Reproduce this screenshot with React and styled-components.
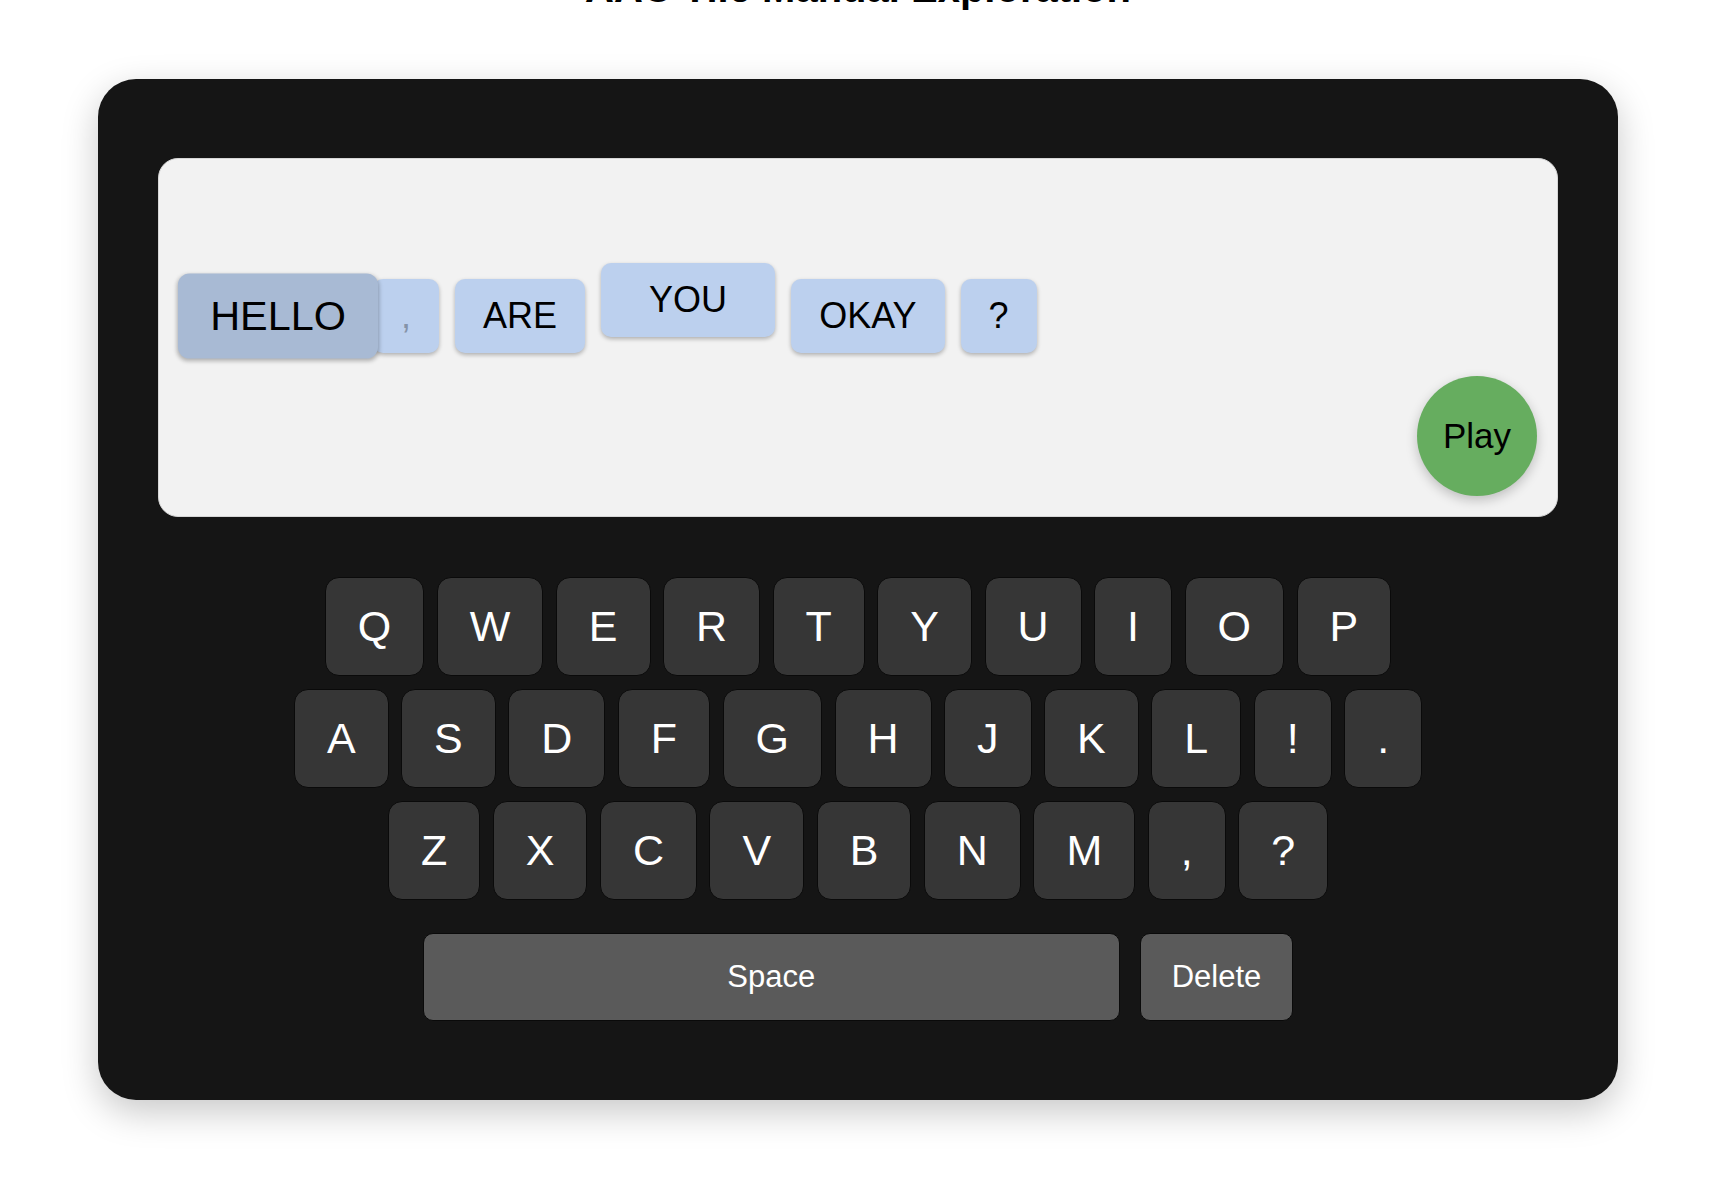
import React from "react";
import styled, { createGlobalStyle } from "styled-components";

const GlobalStyle = createGlobalStyle`
  html {
    overflow: hidden;
  }
  body {
    margin: 0;
    padding: 0;
    background: #ffffff;
    font-family: "Liberation Sans", Arial, sans-serif;
  }
`;

const Page = styled.div`
  width: 1520px;
  padding: 0 0 80px 98px;
`;

const Title = styled.h1`
  margin: -34px 0 68px;
  font-size: 40px;
  font-weight: bold;
  text-align: center;
  color: #000;
`;

const Device = styled.div`
  box-sizing: border-box;
  width: 1520px;
  padding: 79px 60px 79px;
  background: #151515;
  border-radius: 38px;
  box-shadow: 0 12px 36px rgba(0, 0, 0, 0.22);
`;

const Screen = styled.div`
  position: relative;
  box-sizing: border-box;
  height: 359px;
  display: flex;
  align-items: center;
  gap: 16px;
  padding: 0 0 43px 32px;
  background: #f2f2f2;
  border: 1px solid #d6d6d6;
  border-radius: 20px;
`;

const Tile = styled.div`
  position: relative;
  z-index: ${(p) => (p.$active ? 2 : 1)};
  padding: 16px ${(p) => p.$padX || 28}px;
  margin-left: ${(p) => p.$pull || 0}px;
  font-size: 36px;
  color: ${(p) => (p.$faded ? "#8593a8" : "#000")};
  background: ${(p) => (p.$active ? "#a8bad4" : "#bcd0ee")};
  border-radius: 10px;
  box-shadow: 0 2px 4px rgba(0, 0, 0, 0.28);
  transform: ${(p) =>
    p.$active ? "scale(1.15)" : p.$lift ? `translateY(-${p.$lift}px)` : "none"};
  white-space: nowrap;
`;

const PlayButton = styled.button`
  position: absolute;
  right: 20px;
  bottom: 20px;
  width: 120px;
  height: 120px;
  border: none;
  border-radius: 50%;
  background: #66ad5f;
  color: #000;
  font-family: "Liberation Sans", Arial, sans-serif;
  font-size: 35px;
  box-shadow: 0 4px 12px rgba(0, 0, 0, 0.22);
  cursor: pointer;
`;

const Keyboard = styled.div`
  display: flex;
  flex-direction: column;
  align-items: center;
  gap: 13px;
  margin-top: 60px;
`;

const KeyRow = styled.div`
  display: flex;
  justify-content: center;
  gap: 12.5px;
  margin-top: ${(p) => p.$spaced || 0}px;
`;

const Key = styled.button`
  box-sizing: border-box;
  padding: 24px 32px;
  font-family: "Liberation Sans", Arial, sans-serif;
  font-size: 43px;
  line-height: normal;
  color: #ffffff;
  background: #363636;
  border: 1px solid #0a0a0a;
  border-radius: 14px;
  cursor: pointer;
`;

const WideKey = styled(Key)`
  width: ${(p) => p.$width}px;
  padding: 25px 31px;
  font-size: 31px;
  background: #5a5a5a;
  border-radius: 10px;
`;

const BottomRow = styled(KeyRow)`
  gap: 20px;
`;

const tiles = [
  { text: "HELLO", active: true },
  { text: ",", faded: true, pull: -8 },
  { text: "ARE" },
  { text: "YOU", padX: 48, lift: 16 },
  { text: "OKAY" },
  { text: "?" },
];

const rows = [
  ["Q", "W", "E", "R", "T", "Y", "U", "I", "O", "P"],
  ["A", "S", "D", "F", "G", "H", "J", "K", "L", "!", "."],
  ["Z", "X", "C", "V", "B", "N", "M", ",", "?"],
];

export default function App() {
  return (
    <>
      <GlobalStyle />
      <Page>
        <Title>AAC Tile Manual Exploration</Title>
        <Device>
          <Screen>
            {tiles.map((t, i) => (
              <Tile
                key={i}
                $active={t.active}
                $faded={t.faded}
                $pull={t.pull}
                $padX={t.padX}
                $lift={t.lift}
              >
                {t.text}
              </Tile>
            ))}
            <PlayButton>Play</PlayButton>
          </Screen>
          <Keyboard>
            {rows.map((row, r) => (
              <KeyRow key={r}>
                {row.map((k) => (
                  <Key key={k}>{k}</Key>
                ))}
              </KeyRow>
            ))}
            <BottomRow $spaced={20}>
              <WideKey $width={697}>Space</WideKey>
              <WideKey>Delete</WideKey>
            </BottomRow>
          </Keyboard>
        </Device>
      </Page>
    </>
  );
}
